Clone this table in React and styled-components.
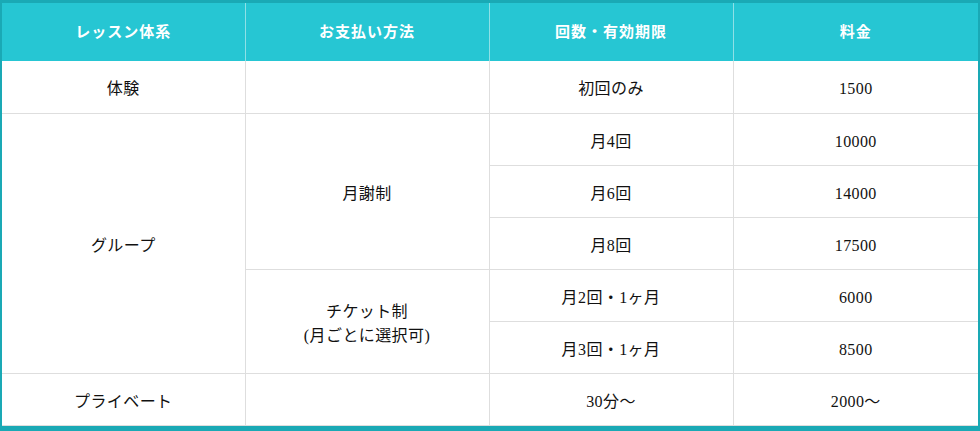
import React from 'react';
import styled, { createGlobalStyle } from 'styled-components';

const GlobalStyle = createGlobalStyle`
  html, body {
    margin: 0;
    padding: 0;
    background: #fff;
  }
`;

const rows = [
  { plan: '体験', payment: '', count: '初回のみ', price: '1500', planSpan: 1, paySpan: 1 },
  { plan: 'グループ', payment: '月謝制', count: '月4回', price: '10000', planSpan: 5, paySpan: 3 },
  { count: '月6回', price: '14000' },
  { count: '月8回', price: '17500' },
  { payment: ['チケット制', '(月ごとに選択可)'], count: '月2回・1ヶ月', price: '6000', paySpan: 2 },
  { count: '月3回・1ヶ月', price: '8500' },
  { plan: 'プライベート', payment: '', count: '30分〜', price: '2000〜', planSpan: 1, paySpan: 1 },
];

const headings = ['レッスン体系', 'お支払い方法', '回数・有効期限', '料金'];
const widths = [243, 244, 244, 245];

function App() {
  return (
    <>
      <GlobalStyle />
      <Frame>
        <Table>
          <colgroup>
            {widths.map((w, i) => (
              <col key={i} style={{ width: w }} />
            ))}
          </colgroup>
          <thead>
            <tr>
              {headings.map((h) => (
                <HeadCell key={h}>{h}</HeadCell>
              ))}
            </tr>
          </thead>
          <tbody>
            {rows.map((row, index) => (
              <Row key={index}>
                {row.plan !== undefined && <Cell rowSpan={row.planSpan}>{row.plan}</Cell>}
                {row.payment !== undefined && (
                  <Cell rowSpan={row.paySpan}>
                    {Array.isArray(row.payment)
                      ? row.payment.map((line) => <Line key={line}>{line}</Line>)
                      : row.payment}
                  </Cell>
                )}
                <Cell>{row.count}</Cell>
                <Cell>{row.price}</Cell>
              </Row>
            ))}
          </tbody>
        </Table>
      </Frame>
    </>
  );
}

const Frame = styled.div`
  width: 980px;
  height: 431px;
  box-sizing: border-box;
  border-style: solid;
  border-color: #1aa9b5;
  border-width: 3px 2px 5px 2px;
  background: #fff;
  overflow: hidden;
`;

const Table = styled.table`
  width: 976px;
  table-layout: fixed;
  border-collapse: collapse;
  font-family: 'Liberation Serif', 'Noto Sans CJK JP', serif;
  font-size: 16px;
  line-height: 22px;
  letter-spacing: 0.4px;
  color: #111;
`;

const HeadCell = styled.th`
  height: 58px;
  padding: 0;
  box-sizing: border-box;
  background: #26c6d3;
  color: #fff;
  font-size: 15px;
  letter-spacing: 1px;
  font-weight: bold;
  text-align: center;
  border-left: 1px solid #8fe0e6;
  &:first-child {
    border-left: none;
  }
`;

const Row = styled.tr`
  height: 52px;
`;

const Cell = styled.td`
  padding: 5px 0 0;
  text-align: center;
  vertical-align: middle;
  border: 1px solid #dedede;
  &:first-child {
    border-left: none;
  }
  &:last-child {
    border-right: none;
  }
  tr:first-child > & {
    border-top: none;
  }
`;

const Line = styled.div`
  line-height: 24px;
`;

export default App;
